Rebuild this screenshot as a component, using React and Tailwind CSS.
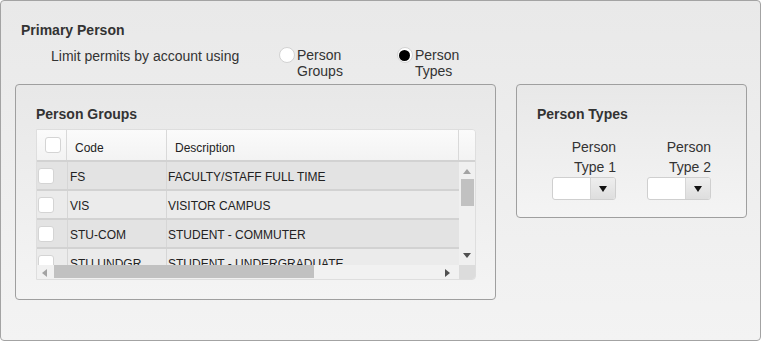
const groups = [
  { code: "FS", desc: "FACULTY/STAFF FULL TIME" },
  { code: "VIS", desc: "VISITOR CAMPUS" },
  { code: "STU-COM", desc: "STUDENT - COMMUTER" },
  { code: "STU UNDGR", desc: "STUDENT - UNDERGRADUATE" },
];

function Radio({ checked, label1, label2 }) {
  return (
    <div className="flex items-start">
      <span className="flex h-[16px] w-[16px] items-center justify-center rounded-full border border-[#d2d2d2] bg-white">
        {checked && <span className="h-[11px] w-[11px] rounded-full bg-black" />}
      </span>
      <div className="ml-[2px] leading-4">
        <div>{label1}</div>
        <div>{label2}</div>
      </div>
    </div>
  );
}

function Box() {
  return <span className="block h-4 w-4 rounded-[3px] border border-[#d4d4d4] bg-white" />;
}

function Select() {
  return (
    <div className="flex h-[23px] w-[64px] overflow-hidden rounded-[3px] border border-[#cfcfcf] bg-white">
      <div className="flex-1" />
      <div className="flex w-[25px] items-center justify-center border-l border-[#d6d6d6] bg-gradient-to-b from-[#eeeeee] to-[#dedede]">
        <svg width="8" height="6" viewBox="0 0 8 6">
          <path d="M0 0 H8 L4 6 Z" fill="#111" />
        </svg>
      </div>
    </div>
  );
}

export default function App() {
  return (
    <div className="h-[341px] w-[761px] font-['Liberation_Sans',Arial,sans-serif] text-[14px] text-[#333]">
      <div className="h-full w-full rounded-[4px] border border-[#a3a3a3] bg-gradient-to-b from-[#e9e9e9] to-[#f3f3f3] px-[20px] pt-[21px]">
        <div className="font-bold leading-4">Primary Person</div>
        <div className="mt-[9px] flex items-start">
          <div className="ml-[30px] mt-px w-[228px] leading-4">Limit permits by account using</div>
          <Radio label1="Person" label2="Groups" />
          <div className="ml-[54px]">
            <Radio checked label1="Person" label2="Types" />
          </div>
        </div>

        <div className="-ml-[6px] -mr-[20px] mt-[5px] flex items-start">
          {/* person groups */}
          <div className="h-[216px] w-[481px] shrink-0 rounded-[4px] border border-[#9f9f9f] bg-gradient-to-b from-[#e8e8e8] to-[#f4f4f4] px-[20px] pt-[21px]">
            <div className="font-bold leading-4">Person Groups</div>
            <div className="mt-[7px] h-[151px] w-[440px] overflow-hidden rounded-r-[4px] border border-[#dedede] bg-[#f1f1f1] text-[12px] text-[#222]">
              <div className="flex h-[32px] border-b-2 border-[#d2d2d2] bg-gradient-to-b from-[#fbfbfb] to-[#f3f3f3]">
                <div className="flex w-[30px] items-center justify-center border-r border-[#d9d9d9] pl-[2px]">
                  <Box />
                </div>
                <div className="flex w-[100px] items-center border-r border-[#d9d9d9] pl-[8px] pt-[5px]">Code</div>
                <div className="flex w-[292px] items-center border-r border-[#d9d9d9] pl-[8px] pt-[5px]">Description</div>
                <div className="flex-1" />
              </div>
              <div className="flex h-[103px]">
                <div className="w-[422px] overflow-hidden">
                  {groups.map((g, i) => (
                    <div
                      key={g.code}
                      className={
                        "flex h-[29px] border-b-2 border-[#d2d2d2] " +
                        (i % 2 === 0 ? "bg-[#e3e3e3]" : "bg-[#ebebeb]")
                      }
                    >
                      <div className="flex w-[30px] items-center pl-[1px]">
                        <Box />
                      </div>
                      <div className="flex w-[100px] items-center border-x border-[#d6d6d6] pl-[2px] pt-[2px]">{g.code}</div>
                      <div className="flex w-[292px] shrink-0 items-center pl-[1px] pt-[2px]">{g.desc}</div>
                    </div>
                  ))}
                </div>
                <div className="relative w-[16px] bg-[#f0f0f0]">
                  <svg className="absolute left-[4px] top-[7px]" width="8" height="5" viewBox="0 0 8 5">
                    <path d="M0 5 L4 0 L8 5 Z" fill="#a3a3a3" />
                  </svg>
                  <div className="absolute left-[2px] top-[17px] h-[27px] w-[13px] bg-[#c1c1c1]" />
                  <svg className="absolute bottom-[7px] left-[4px]" width="8" height="5" viewBox="0 0 8 5">
                    <path d="M0 0 L8 0 L4 5 Z" fill="#505050" />
                  </svg>
                </div>
              </div>
              <div className="flex h-[15px]">
                <div className="relative w-[422px] bg-[#f1f1f1]">
                  <svg className="absolute left-[5px] top-[4px]" width="5" height="8" viewBox="0 0 5 8">
                    <path d="M5 0 L5 8 L0 4 Z" fill="#a3a3a3" />
                  </svg>
                  <div className="absolute left-[17px] top-0 h-[13px] w-[260px] bg-[#c1c1c1]" />
                  <svg className="absolute right-[9px] top-[4px]" width="5" height="8" viewBox="0 0 5 8">
                    <path d="M0 0 L5 4 L0 8 Z" fill="#505050" />
                  </svg>
                </div>
                <div className="flex-1 bg-[#dcdcdc]" />
              </div>
            </div>
          </div>

          {/* person types */}
          <div className="ml-[20px] h-[134px] w-[231px] shrink-0 rounded-[4px] border border-[#9f9f9f] bg-gradient-to-b from-[#e8e8e8] to-[#f4f4f4] px-[20px] pt-[21px]">
            <div className="font-bold leading-4">Person Types</div>
            <div className="ml-[15px] mt-[15px] flex">
              <div className="flex w-[64px] flex-col items-end">
                <div className="text-right leading-5">
                  <div>Person</div>
                  <div>Type 1</div>
                </div>
                <div className="mt-0">
                  <Select />
                </div>
              </div>
              <div className="ml-[30px] flex w-[65px] flex-col items-end">
                <div className="text-right leading-5">
                  <div>Person</div>
                  <div>Type 2</div>
                </div>
                <div className="mt-0">
                  <Select />
                </div>
              </div>
            </div>
          </div>
        </div>
      </div>
    </div>
  );
}
